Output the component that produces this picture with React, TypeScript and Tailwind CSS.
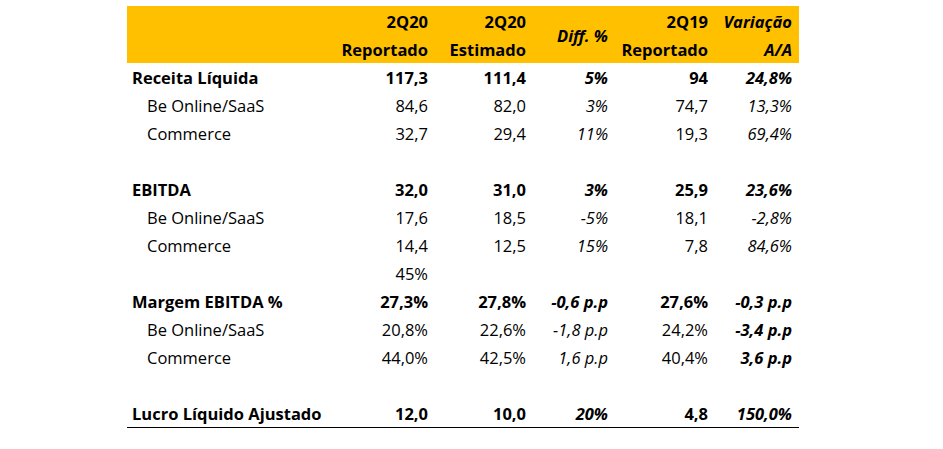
import React from 'react';

type Cell = { v: string; b?: boolean; i?: boolean };
type Row = { label?: string; sub?: boolean; bold?: boolean; cells: Cell[] };

const rows: Row[] = [
  { label: 'Receita Líquida', bold: true, cells: [{ v: '117,3', b: true }, { v: '111,4', b: true }, { v: '5%', b: true, i: true }, { v: '94', b: true }, { v: '24,8%', b: true, i: true }] },
  { label: 'Be Online/SaaS', sub: true, cells: [{ v: '84,6' }, { v: '82,0' }, { v: '3%', i: true }, { v: '74,7' }, { v: '13,3%', i: true }] },
  { label: 'Commerce', sub: true, cells: [{ v: '32,7' }, { v: '29,4' }, { v: '11%', i: true }, { v: '19,3' }, { v: '69,4%', i: true }] },
  { cells: [] },
  { label: 'EBITDA', bold: true, cells: [{ v: '32,0', b: true }, { v: '31,0', b: true }, { v: '3%', b: true, i: true }, { v: '25,9', b: true }, { v: '23,6%', b: true, i: true }] },
  { label: 'Be Online/SaaS', sub: true, cells: [{ v: '17,6' }, { v: '18,5' }, { v: '-5%', i: true }, { v: '18,1' }, { v: '-2,8%', i: true }] },
  { label: 'Commerce', sub: true, cells: [{ v: '14,4' }, { v: '12,5' }, { v: '15%', i: true }, { v: '7,8' }, { v: '84,6%', i: true }] },
  { cells: [{ v: '45%' }] },
  { label: 'Margem EBITDA %', bold: true, cells: [{ v: '27,3%', b: true }, { v: '27,8%', b: true }, { v: '-0,6 p.p', b: true, i: true }, { v: '27,6%', b: true }, { v: '-0,3 p.p', b: true, i: true }] },
  { label: 'Be Online/SaaS', sub: true, cells: [{ v: '20,8%' }, { v: '22,6%' }, { v: '-1,8 p.p', i: true }, { v: '24,2%' }, { v: '-3,4 p.p', b: true, i: true }] },
  { label: 'Commerce', sub: true, cells: [{ v: '44,0%' }, { v: '42,5%' }, { v: '1,6 p.p', i: true }, { v: '40,4%' }, { v: '3,6 p.p', b: true, i: true }] },
  { cells: [] },
  { label: 'Lucro Líquido Ajustado', bold: true, cells: [{ v: '12,0', b: true }, { v: '10,0', b: true }, { v: '20%', b: true, i: true }, { v: '4,8', b: true }, { v: '150,0%', b: true, i: true }] },
];

const grid = 'grid grid-cols-[201px_100px_98px_82px_100px_84px]';

export default function App() {
  return (
    <div className="w-[943px] h-[449px] bg-white pt-[6px] font-['Open_Sans',sans-serif] text-[16.5px] text-black">
      <div className="ml-[127px] w-[672px] border-b border-black">
        <div className={`${grid} h-[57px] bg-[#FFC000] pt-[2px] pr-[7px] font-bold leading-[28px]`}>
          <div />
          <div className="text-right flex flex-col">
            <span>2Q20</span>
            <span>Reportado</span>
          </div>
          <div className="text-right flex flex-col">
            <span>2Q20</span>
            <span>Estimado</span>
          </div>
          <div className="text-right italic flex items-center justify-end">Diff. %</div>
          <div className="text-right flex flex-col">
            <span>2Q19</span>
            <span>Reportado</span>
          </div>
          <div className="text-right italic flex flex-col">
            <span>Variação</span>
            <span>A/A</span>
          </div>
        </div>
        {rows.map((r, idx) => (
          <div key={idx} className={`${grid} h-[28px] pt-[3px] pr-[7px] items-center`}>
            <div className={`${r.sub ? 'pl-[20px]' : 'pl-[5px]'} ${r.bold ? 'font-bold' : ''} whitespace-nowrap`}>
              {r.label ?? ''}
            </div>
            {[0, 1, 2, 3, 4].map(c => {
              const cell = r.cells[c];
              return (
                <div
                  key={c}
                  className={`text-right whitespace-nowrap ${cell?.b ? 'font-bold' : ''} ${cell?.i ? 'italic' : ''}`}
                >
                  {cell?.v ?? ''}
                </div>
              );
            })}
          </div>
        ))}
      </div>
    </div>
  );
}
